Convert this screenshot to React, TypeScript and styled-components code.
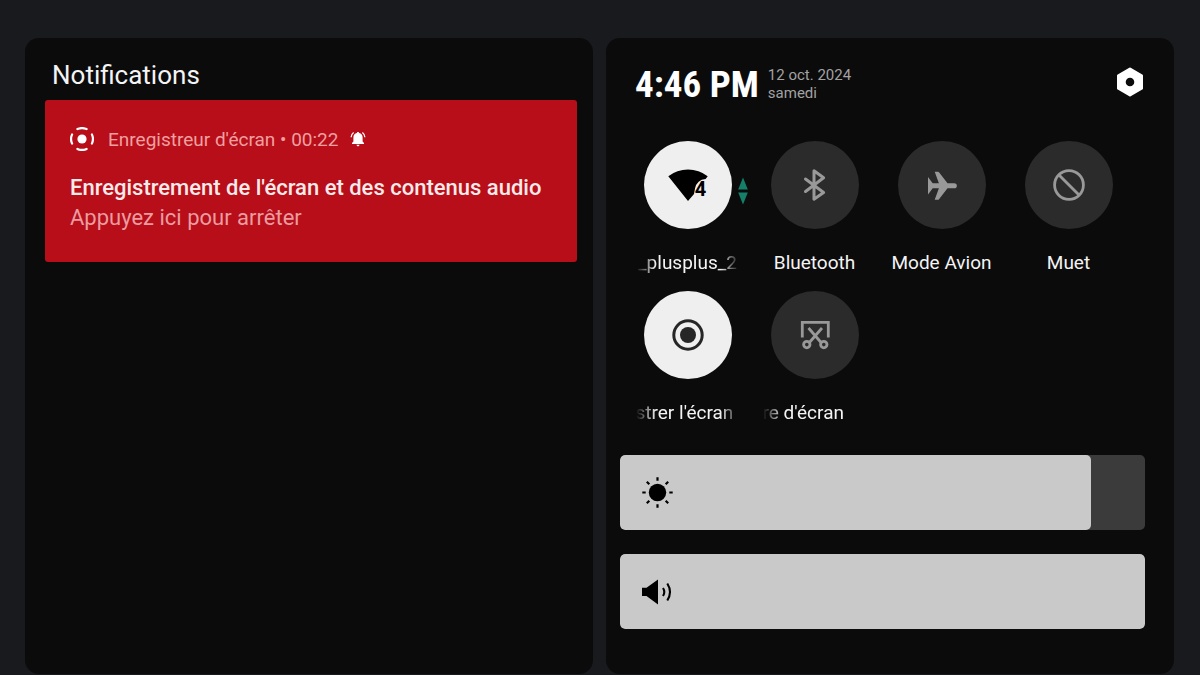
import React, { useState } from "react";
import styled, { createGlobalStyle } from "styled-components";

const GlobalStyle = createGlobalStyle`
  * { box-sizing: border-box; }
  body {
    margin: 0;
    background: #191a1e;
    color: #f4f4f4;
    font-family: Roboto, "Liberation Sans", sans-serif;
  }
  button { font: inherit; color: inherit; }
`;

const Shade = styled.main`
  display: grid;
  grid-template-columns: 1fr 1fr;
  gap: 13px;
  min-height: 100vh;
  padding: 38px 26px 1px 25px;
`;

const Panel = styled.section`
  display: flex;
  flex-direction: column;
  min-width: 0;
  background: #0b0b0c;
  border-radius: 14px;
`;

const PanelTitle = styled.h1`
  margin: 0;
  padding: 21px 27px 9px;
  font-size: 26px;
  line-height: 32px;
  font-weight: 400;
`;

const Notification = styled.article`
  margin: 0 16px 0 20px;
  padding: 25px 25px 29px;
  background: #b70e19;
  border-radius: 3px;
`;

const NotificationHeader = styled.header`
  display: flex;
  align-items: center;
  height: 28px;
  margin-bottom: 20px;
  font-size: 19px;
  color: #f0a0a0;
`;

const AppName = styled.span`
  margin: 0 12px 0 14px;
  white-space: nowrap;
`;

const NotificationTitle = styled.h2`
  margin: 0;
  font-size: 22px;
  line-height: 30px;
  font-weight: 500;
  color: #fbeaea;
`;

const NotificationText = styled.p`
  margin: 0;
  font-size: 22px;
  line-height: 30px;
  color: #eb9ca0;
`;

const StatusBar = styled.header`
  display: flex;
  align-items: center;
  padding: 20px 31px 4px 29px;
  height: 72px;
`;

const Clock = styled.time`
  padding-top: 6px;
  font-family: "Roboto Condensed", "Liberation Sans Narrow", Roboto, sans-serif;
  font-size: 37px;
  line-height: 44px;
  font-weight: 700;
  color: #fff;
  white-space: nowrap;
`;

const DateText = styled.div`
  flex: 1;
  margin-left: 9px;
  padding-top: 4px;
  font-size: 15px;
  line-height: 18px;
  color: #a2a2a2;
`;

const IconButton = styled.button`
  display: flex;
  padding: 0;
  border: 0;
  background: none;
  cursor: pointer;
`;

const Tiles = styled.div`
  display: grid;
  grid-template-columns: repeat(4, 1fr);
  row-gap: 12px;
  padding: 31px 42px 0 18px;
`;

const Tile = styled.button`
  display: flex;
  flex-direction: column;
  align-items: center;
  gap: 20px;
  padding: 0;
  border: 0;
  background: none;
  cursor: pointer;
`;

const TileCircle = styled.span<{ $on: boolean }>`
  position: relative;
  display: flex;
  align-items: center;
  justify-content: center;
  width: 88px;
  height: 88px;
  border-radius: 50%;
  background: ${(p) => (p.$on ? "#efefef" : "#2b2b2b")};
  color: ${(p) => (p.$on ? "#262626" : "#999")};
`;

const Traffic = styled.svg`
  position: absolute;
  left: 94px;
  top: 36px;
`;

const TileLabel = styled.span<{ $faded?: boolean; $align?: string }>`
  width: 104px;
  height: 30px;
  overflow: hidden;
  font-size: 19px;
  line-height: 28px;
  white-space: nowrap;
  text-align: ${(p) => p.$align ?? "center"};
  ${(p) =>
    p.$faded &&
    "mask-image: linear-gradient(90deg, transparent 0, #000 20px, #000 84px, transparent 104px);"}
`;

const Sliders = styled.div`
  display: flex;
  flex-direction: column;
  gap: 24px;
  padding: 26px 29px 44px 14px;
`;

const SliderTrack = styled.label`
  position: relative;
  display: flex;
  height: 75px;
  overflow: hidden;
  border-radius: 5px;
  background: #3b3b3b;
`;

const SliderFill = styled.span`
  display: flex;
  align-items: center;
  padding-left: 21px;
  border-radius: 5px;
  background: #c9c9c9;
`;

const SliderInput = styled.input`
  position: absolute;
  inset: 0;
  width: 100%;
  height: 100%;
  margin: 0;
  opacity: 0;
  cursor: pointer;
`;

const RecorderIcon = () => (
  <svg width="24" height="24" viewBox="0 0 24 24" fill="none" aria-hidden="true">
    <circle cx="12" cy="12" r="4.6" fill="#fff" />
    <g stroke="#fff" strokeWidth="2.2" strokeLinecap="round">
      <path d="M7.4 2.1a11 11 0 0 1 9.2 0" />
      <path d="M21.9 7.4a11 11 0 0 1 0 9.2" />
      <path d="M16.6 21.9a11 11 0 0 1-9.2 0" />
      <path d="M2.1 16.6a11 11 0 0 1 0-9.2" />
    </g>
  </svg>
);

const BellIcon = () => (
  <svg width="16" height="16" viewBox="0 0 16 16" aria-hidden="true">
    <path
      fill="#fff"
      d="M8 1c.7 0 1.1.5 1.1 1.1C11.3 2.6 12.6 4.3 12.6 6.5v4l1.4 1.5v.9H2V12l1.4-1.5v-4c0-2.2 1.3-3.9 3.5-4.4C6.9 1.5 7.3 1 8 1zM6.5 13.7h3c0 .9-.7 1.5-1.5 1.5s-1.5-.6-1.5-1.5z"
    />
    <path d="M3.6 1.6Q1.3 3.3 1.1 6.3M12.4 1.6q2.3 1.7 2.5 4.7" fill="none" stroke="#fff" strokeWidth="1.3" />
  </svg>
);

const SettingsIcon = () => (
  <svg width="26" height="30" viewBox="0 0 26 30" aria-hidden="true">
    <path
      fill="#fff"
      fillRule="evenodd"
      d="M12.3.8a1.4 1.4 0 0 1 1.4 0l11.6 6.6a1.4 1.4 0 0 1 .7 1.2v12.8a1.4 1.4 0 0 1-.7 1.2l-11.6 6.6a1.4 1.4 0 0 1-1.4 0L.7 22.600a1.4 1.4 0 0 1-.7-1.2V8.600a1.4 1.4 0 0 1 .7-1.2zM13 10.700a4.3 4.3 0 1 0 0 8.600 4.3 4.3 0 0 0 0-8.600z"
    />
  </svg>
);

const WifiIcon = () => (
  <svg width="44" height="44" viewBox="0 0 44 44" aria-hidden="true">
    <path fill="#000" d="M2.3 13.3Q11 6.5 22 6.5t19.7 6.8L39.6 16Q31 16.500 29 25.500L28 31 22 38z" />
    <text x="34.5" y="33" textAnchor="middle" fontFamily="Roboto, sans-serif" fontWeight="700" fontSize="20" fill="#000">
      4
    </text>
  </svg>
);

const BluetoothIcon = () => (
  <svg width="44" height="44" viewBox="0 0 44 44" fill="none" stroke="currentColor" strokeWidth="3" strokeLinejoin="round" strokeLinecap="round" aria-hidden="true">
    <path d="M12.5 16L30.600 29.500 21 36.200V7.800l9.600 7L12.500 28.500" />
  </svg>
);

const PlaneIcon = () => (
  <svg width="44" height="44" viewBox="0 0 44 44" fill="currentColor" aria-hidden="true">
    <path d="M34.300 20.200H27.500L19 9.300Q18.600 8.800 18 8.800H14.700L18.900 20.200H12.700L8 14V31.500L12.700 25.300H18.900L14.700 36.700H18Q18.600 36.700 19 36.200L27.500 25.300H34.300a2.550 2.550 0 0 0 0-5.100z" />
  </svg>
);

const MuteIcon = () => (
  <svg width="44" height="44" viewBox="0 0 44 44" fill="none" stroke="currentColor" strokeWidth="2.8" aria-hidden="true">
    <circle cx="22" cy="22" r="14.4" />
    <path d="M12 12l20 20" />
  </svg>
);

const RecordIcon = () => (
  <svg width="44" height="44" viewBox="0 0 44 44" aria-hidden="true">
    <circle cx="22" cy="22" r="14.2" fill="none" stroke="currentColor" strokeWidth="3" />
    <circle cx="22" cy="22" r="8" fill="currentColor" />
  </svg>
);

const ScreenshotIcon = () => (
  <svg width="44" height="44" viewBox="0 0 44 44" fill="none" stroke="currentColor" strokeWidth="2.8" aria-hidden="true">
    <path d="M9.3 24.5V9.300h26v15.200" />
    <path d="M15.5 15l12.600 14.500M29 15L16.400 29.500" />
    <circle cx="13.8" cy="31.6" r="3.2" />
    <circle cx="30.8" cy="31.6" r="3.2" />
  </svg>
);

const SunIcon = () => (
  <svg width="32" height="32" viewBox="0 0 32 32" aria-hidden="true">
    <circle cx="16.5" cy="15.5" r="8.7" />
    <g stroke="#000" strokeWidth="2.2" transform="translate(.5 -.5)">
      <path d="M16 .8v3.400M16 27.800v3.400M.8 16h3.400M27.800 16h3.400M5.300 5.300l2.500 2.500M24.200 24.200l2.500 2.500M5.300 26.700l2.500-2.500M24.200 7.800l2.500-2.500" />
    </g>
  </svg>
);

const SpeakerIcon = () => (
  <svg width="32" height="32" viewBox="0 0 32 32" aria-hidden="true">
    <path d="M1 11.700h4.500L17 3.500v25L5.500 20H1z" />
    <path d="M22 12q2.600 4 0 8M26.300 7.500q5.400 8.500 0 17" fill="none" stroke="#000" strokeWidth="2.1" />
  </svg>
);

interface TileData {
  label: string;
  icon: React.ReactNode;
  on?: boolean;
  faded?: boolean;
  align?: "left" | "center";
  traffic?: boolean;
}

const tiles: TileData[] = [
  { label: "_plusplus_2", icon: <WifiIcon />, on: true, faded: true, traffic: true },
  { label: "Bluetooth", icon: <BluetoothIcon /> },
  { label: "Mode Avion", icon: <PlaneIcon /> },
  { label: "Muet", icon: <MuteIcon /> },
  { label: "strer l'écran", icon: <RecordIcon />, on: true, faded: true, align: "left" },
  { label: "re d'écran", icon: <ScreenshotIcon />, faded: true, align: "left" },
];

function QuickTile({ tile }: { tile: TileData }) {
  const [on, setOn] = useState(Boolean(tile.on));
  return (
    <Tile type="button" aria-pressed={on} onClick={() => setOn(!on)}>
      <TileCircle $on={on}>
        {tile.icon}
        {tile.traffic && (
          <Traffic width="10" height="28" viewBox="0 0 10 28" fill="#14806a" aria-hidden="true">
            <path d="M5 .5L9.800 12.500H.2zM5 27.500L.2 15.500h9.600z" />
          </Traffic>
        )}
      </TileCircle>
      <TileLabel $faded={tile.faded} $align={tile.align}>{tile.label}</TileLabel>
    </Tile>
  );
}

function Slider({ name, initial, icon }: { name: string; initial: number; icon: React.ReactNode }) {
  const [value, setValue] = useState(initial);
  return (
    <SliderTrack>
      <SliderFill style={{ width: `${value}%` }}>{icon}</SliderFill>
      <SliderInput
        type="range"
        min={0}
        max={100}
        step="any"
        aria-label={name}
        value={value}
        onChange={(e) => setValue(Number(e.target.value))}
      />
    </SliderTrack>
  );
}

export default function App() {
  return (
    <>
      <GlobalStyle />
      <Shade>
        <Panel>
          <PanelTitle>Notifications</PanelTitle>
          <Notification>
            <NotificationHeader>
              <RecorderIcon />
              <AppName>Enregistreur d'écran • 00:22</AppName>
              <BellIcon />
            </NotificationHeader>
            <NotificationTitle>Enregistrement de l'écran et des contenus audio</NotificationTitle>
            <NotificationText>Appuyez ici pour arrêter</NotificationText>
          </Notification>
        </Panel>
        <Panel>
          <StatusBar>
            <Clock>4:46 PM</Clock>
            <DateText>
              <div>12 oct. 2024</div>
              <div>samedi</div>
            </DateText>
            <IconButton type="button" aria-label="Paramètres">
              <SettingsIcon />
            </IconButton>
          </StatusBar>
          <Tiles>
            {tiles.map((tile) => (
              <QuickTile key={tile.label} tile={tile} />
            ))}
          </Tiles>
          <Sliders>
            <Slider name="Luminosité" initial={89.7} icon={<SunIcon />} />
            <Slider name="Volume" initial={100} icon={<SpeakerIcon />} />
          </Sliders>
        </Panel>
      </Shade>
    </>
  );
}
